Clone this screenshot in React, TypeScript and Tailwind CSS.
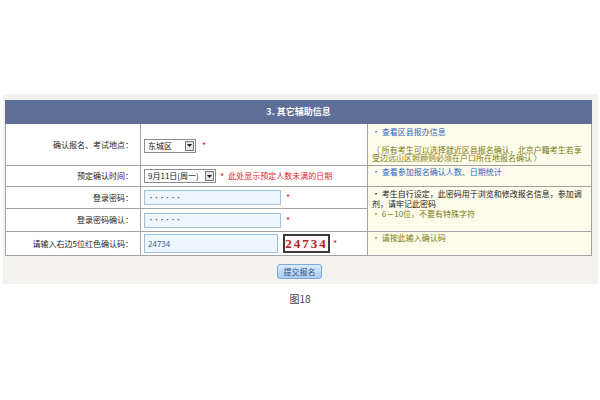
import React from "react"

const font = { fontFamily: '"Noto Sans CJK SC", "Liberation Sans", sans-serif' }

function FakeSelect({ value, width }: { value: string; width: string }) {
  return (
    <div className={`inline-flex items-center justify-between h-[14px] ${width} border border-[#8c8c8c] bg-white pl-[3px] pr-[1px]`}>
      <span className="text-[8px] leading-none text-[#222]">{value}</span>
      <span className="flex h-[10px] w-[9px] items-center justify-center border border-[#777] bg-[#e4e4e4]">
        <svg width="5" height="3" viewBox="0 0 5 3"><path d="M0 0h5L2.5 3z" fill="#222" /></svg>
      </span>
    </div>
  )
}

function Star() {
  return <span className="text-[#e0262b] text-[9px] leading-none">*</span>
}

function TextBox({ value, dots }: { value: string; dots?: boolean }) {
  return (
    <div className="flex h-[15px] w-[137px] items-center border border-[#9fc0de] bg-[#eef5fc] pl-[3px]">
      <span className={`${dots ? "text-[6px] tracking-[-0.5px] text-[#2a3350]" : "text-[8px] text-[#4a5f8a]"} leading-none`}>{value}</span>
    </div>
  )
}

export default function App() {
  const label = "border border-[#a3a3a3] bg-white text-right pr-[7px] text-[8px] text-[#222] w-[135px]"
  const mid = "border border-[#a3a3a3] bg-white pl-[3px] w-[227px]"
  const right = "border border-[#a3a3a3] bg-[#fdfbe9] pl-[4px] pr-[3px] align-top text-[8px]"

  return (
    <div className="w-[600px] h-[400px] bg-white" style={font}>
      <div className="h-[94px]" />
      <div className="ml-[3px] w-[595px] h-[190px] bg-[#f3f2ef] pt-[6px] pl-[2px]">
        <table className="border-collapse w-[587px]">
          <tbody>
            <tr className="h-[23px]">
              <td colSpan={3} className="border border-[#5e6e97] bg-[#5e6e97] text-center text-white text-[9px] font-bold">
                3. 其它辅助信息
              </td>
            </tr>
            <tr className="h-[42px]">
              <td className={label}>确认报名、考试地点：</td>
              <td className={mid}>
                <div className="flex items-center gap-[6px] mt-[2px]">
                  <FakeSelect value="东城区" width="w-[52px]" />
                  <Star />
                </div>
              </td>
              <td className={right}>
                <div className="pt-[3px] leading-[9px] text-[#2f66c4]">· 查看区县报办信息</div>
                <div className="mt-[10px] leading-[8px] text-[#7a7a10]">
                  （ 所有考生可以选择就近区县报名确认，北京户籍考生若享受边远山区照顾则必须在户口所在地报名确认 ）
                </div>
              </td>
            </tr>
            <tr className="h-[21px]">
              <td className={label}>预定确认时间：</td>
              <td className={mid}>
                <div className="flex items-center gap-[4px]">
                  <FakeSelect value="9月11日(周一)" width="w-[72px]" />
                  <Star />
                  <span className="text-[8px] leading-none text-[#e0262b]">此处显示预定人数未满的日期</span>
                </div>
              </td>
              <td className={`${right} align-middle`}>
                <span className="text-[#2f66c4]">· 查看参加报名确认人数、日期统计</span>
              </td>
            </tr>
            <tr className="h-[22px]">
              <td className={label}>登录密码：</td>
              <td className={mid}>
                <div className="flex items-center gap-[5px]">
                  <TextBox value="••••••" dots />
                  <Star />
                </div>
              </td>
              <td rowSpan={2} className={right}>
                <div className="pt-[2px] leading-[10px] text-[#222]">
                  · 考生自行设定，此密码用于浏览和修改报名信息，参加调剂，请牢记此密码
                </div>
                <div className="leading-[10px] text-[#7a7a10]">· 6－10位，不要有特殊字符</div>
              </td>
            </tr>
            <tr className="h-[23px]">
              <td className={label}>登录密码确认：</td>
              <td className={mid}>
                <div className="flex items-center gap-[5px]">
                  <TextBox value="••••••" dots />
                  <Star />
                </div>
              </td>
            </tr>
            <tr className="h-[24px]">
              <td className={label}>请输入右边5位红色确认码：</td>
              <td className={mid}>
                <div className="flex items-center gap-[3px]">
                  <div className="flex h-[19px] w-[134px] items-center border border-[#9fc0de] bg-[#eef5fc] pl-[3px]">
                    <span className="text-[8px] leading-none text-[#4a5f8a]">24734</span>
                  </div>
                  <div className="ml-[2px] flex h-[19px] w-[47px] items-center justify-center border-2 border-[#3a3a3a] bg-[#fff8f8]">
                    <span className="text-[13px] font-bold leading-none tracking-[2px] text-[#b3232b]" style={{ fontFamily: '"Liberation Serif", serif' }}>24734</span>
                  </div>
                  <Star />
                </div>
              </td>
              <td className={`${right} align-middle text-[#7a7a10]`}>· 请按此输入确认码</td>
            </tr>
          </tbody>
        </table>
        <div className="flex justify-center pt-[8px] pr-[4px]">
          <button className="h-[15px] w-[45px] rounded-[3px] border border-[#7ea8d6] bg-gradient-to-b from-[#dbeafa] to-[#a9cbee] text-[8px] leading-none text-[#2c4f82]">
            提交报名
          </button>
        </div>
      </div>
      <div className="pt-[7px] text-center text-[10px] text-[#444]">图18</div>
    </div>
  )
}
